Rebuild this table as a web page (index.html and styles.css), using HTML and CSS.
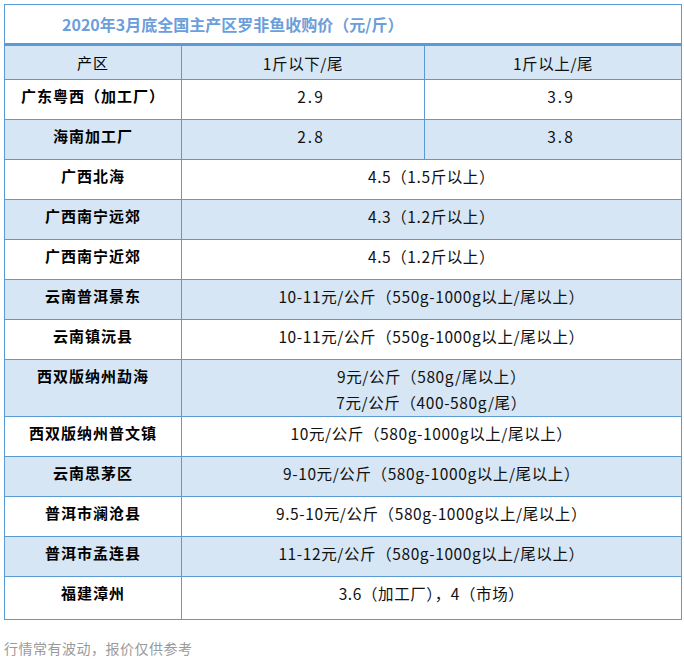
FILE: index.html
```html
<!DOCTYPE html>
<html lang="zh-CN">
<head>
<meta charset="utf-8">
<link rel="stylesheet" href="styles.css">
</head>
<body>
<div class="page">
  <table class="price">
    <colgroup>
      <col class="c1"><col class="c2"><col class="c3">
    </colgroup>
    <tr class="title-row"><td colspan="3" class="title">2020年3月底全国主产区罗非鱼收购价（元/斤）</td></tr>
    <tr class="head band"><td class="area">产区</td><td>1斤以下/尾</td><td>1斤以上/尾</td></tr>
    <tr class="row"><td class="area">广东粤西（加工厂）</td><td class="num">2.9</td><td class="num">3.9</td></tr>
    <tr class="row band"><td class="area">海南加工厂</td><td class="num">2.8</td><td class="num">3.8</td></tr>
    <tr class="row"><td class="area">广西北海</td><td colspan="2">4.5（1.5斤以上）</td></tr>
    <tr class="row band"><td class="area">广西南宁远郊</td><td colspan="2">4.3（1.2斤以上）</td></tr>
    <tr class="row"><td class="area">广西南宁近郊</td><td colspan="2">4.5（1.2斤以上）</td></tr>
    <tr class="row band"><td class="area">云南普洱景东</td><td colspan="2">10-11元/公斤（550g-1000g以上/尾以上）</td></tr>
    <tr class="row"><td class="area">云南镇沅县</td><td colspan="2">10-11元/公斤（550g-1000g以上/尾以上）</td></tr>
    <tr class="row tall band"><td class="area">西双版纳州勐海</td><td colspan="2">9元/公斤（580g/尾以上）<br>7元/公斤（400-580g/尾）</td></tr>
    <tr class="row"><td class="area">西双版纳州普文镇</td><td colspan="2">10元/公斤（580g-1000g以上/尾以上）</td></tr>
    <tr class="row band"><td class="area">云南思茅区</td><td colspan="2">9-10元/公斤（580g-1000g以上/尾以上）</td></tr>
    <tr class="row"><td class="area">普洱市澜沧县</td><td colspan="2">9.5-10元/公斤（580g-1000g以上/尾以上）</td></tr>
    <tr class="row band"><td class="area">普洱市孟连县</td><td colspan="2">11-12元/公斤（580g-1000g以上/尾以上）</td></tr>
    <tr class="row last"><td class="area">福建漳州</td><td colspan="2">3.6（加工厂），4（市场）</td></tr>
  </table>
  <p class="note">行情常有波动，报价仅供参考</p>
</div>
</body>
</html>
```

FILE: styles.css
```css
html, body {
  margin: 0;
  padding: 0;
  background: #ffffff;
}

.page {
  padding: 4px 0 0 4px;
}

.price {
  border-collapse: collapse;
  width: 677px;
  table-layout: fixed;
  font-family: "Noto Sans CJK SC", sans-serif;
  font-size: 15.5px;
  letter-spacing: 0.6px;
  color: #111;
}

.c1 { width: 177px; }
.c2 { width: 243px; }
.c3 { width: 257px; }

.price td {
  border: 1px solid #5b9bd5;
  padding: 3px 0 0 0;
  line-height: 26px;
  text-align: center;
  vertical-align: top;
}

.title-row td {
  border-bottom: 3px solid #5b9bd5;
}

.price td.title {
  height: 38px;
  padding: 0 0 0 57px;
  text-align: left;
  vertical-align: middle;
  font-size: 16px;
  font-weight: bold;
  letter-spacing: 0;
  color: #6b9edb;
}

.head td {
  height: 33px;
  padding: 0;
  vertical-align: middle;
}

.band td {
  background: #d7e6f4;
}

.row td {
  height: 36px;
}

.row.tall td {
  height: 53px;
}

.row.last td {
  height: 39px;
}

.price td.area {
  font-weight: bold;
  font-size: 15px;
  letter-spacing: 1px;
  color: #000;
}

.head td.area {
  font-weight: normal;
}

.price td.num {
  padding-left: 16px;
  letter-spacing: 2px;
}

.note {
  margin: 18px 0 0 0;
  font-family: "Noto Sans CJK SC", sans-serif;
  font-size: 14px;
  letter-spacing: 0.5px;
  color: #9a9a9a;
  line-height: 20px;
}
```
